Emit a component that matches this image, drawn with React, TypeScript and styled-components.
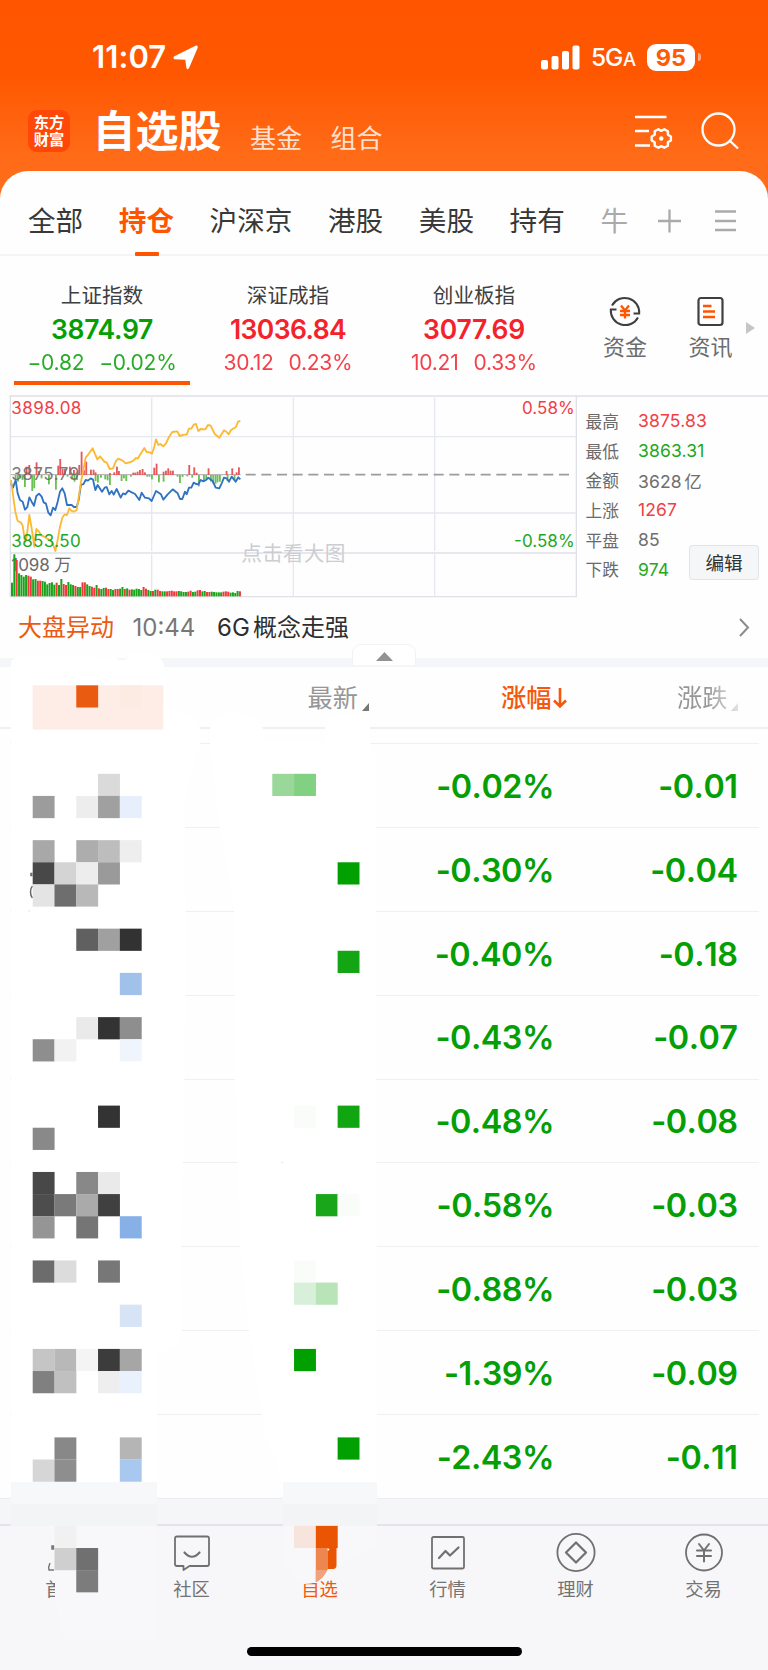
import React from "react";
import styled, { createGlobalStyle, css } from "styled-components";

const GREEN = "#049f04";
const RED = "#f3222b";
const ORANGE = "#ff5500";

const Global = createGlobalStyle`
  * { box-sizing: border-box; }
  body {
    margin: 0;
    background: #fefefe;
    font-family: Inter, "Noto Sans CJK SC", sans-serif;
    color: #333;
  }
`;

const Page = styled.div`
  position: relative;
  width: 768px;
  height: 1670px;
  overflow: hidden;
  display: flex;
  flex-direction: column;
  background: linear-gradient(#ff5500 0, #ff5700 75px, #ff6a17 150px, #ff6e1c 200px);
  white-space: nowrap;
`;

/* ---------- status bar ---------- */
const StatusBar = styled.header`
  height: 90px;
  padding: 24px 67px 0 92px;
  display: flex;
  align-items: center;
  color: #fff;
`;
const Clock = styled.span`
  font-size: 31px;
  font-weight: 600;
  line-height: 36px;
  letter-spacing: 0.1px;
  width: 81px;
  margin-top: -1px;
`;
const StatusRight = styled.div`
  margin-left: auto;
  display: flex;
  align-items: center;
`;
const Network = styled.span`
  width: 56px;
  margin: 1px 0 0 11px;
  font-size: 24.5px;
  font-weight: 500;
  letter-spacing: -1.2px;
  line-height: 30px;
  small { font-size: 18.5px; margin-left: 1px; }
`;
const Battery = styled.div`
  width: 48px;
  height: 27px;
  border-radius: 9px;
  background: #fff;
  color: #ff5a04;
  font-size: 23.5px;
  font-weight: 700;
  line-height: 27px;
  text-align: center;
`;
const BatteryNub = styled.div`
  width: 3px;
  height: 8px;
  margin-left: 3px;
  border-radius: 0 3px 3px 0;
  background: #ffa87c;
`;

/* ---------- title bar ---------- */
const TitleBar = styled.div`
  height: 81px;
  padding: 0 29px 0 28px;
  display: flex;
  align-items: center;
`;
const Logo = styled.div`
  width: 42px;
  height: 42px;
  border-radius: 9px;
  background: #ff4708;
  color: #fff;
  font-family: "Liberation Sans", "Noto Sans CJK SC", sans-serif;
  font-size: 15.3px;
  font-weight: 700;
  line-height: 17.6px;
  padding-top: 4px;
  text-align: center;
`;
const PageTitle = styled.h1`
  margin: 0 0 0 22.5px;
  font-size: 43px;
  font-weight: 700;
  line-height: 48px;
  color: #fff;
`;
const TitleLink = styled.span<{ $gap: number }>`
  margin: 17px 0 0 ${(p) => p.$gap}px;
  font-size: 26px;
  line-height: 30px;
  color: #ffe0cf;
`;
const TitleIcons = styled.div`
  margin-left: auto;
  display: flex;
  align-items: center;
`;

/* ---------- white panel ---------- */
const Panel = styled.main`
  flex: 1;
  display: flex;
  flex-direction: column;
  background: #fefefe;
  border-radius: 28px 28px 0 0;
`;
const Tabs = styled.nav`
  height: 85px;
  padding: 17px 0 0 28px;
  display: flex;
  align-items: center;
  gap: 35.6px;
  border-bottom: 2px solid #f4f4f5;
`;
const Tab = styled.span<{ $on?: boolean; $faded?: boolean }>`
  position: relative;
  flex: none;
  font-size: 27.6px;
  line-height: 34px;
  color: ${(p) => (p.$on ? ORANGE : p.$faded ? "#aaa" : "#383838")};
  font-weight: ${(p) => (p.$on ? 700 : 400)};
  ${(p) =>
    p.$on &&
    css`
      &::after {
        content: "";
        position: absolute;
        left: 16px;
        bottom: -18px;
        width: 24px;
        height: 4px;
        background: ${ORANGE};
        border-radius: 1px;
      }
    `}
`;
const TabTools = styled.div`
  margin-left: -6.5px;
  flex: none;
  display: flex;
`;

/* ---------- index strip ---------- */
const IndexStrip = styled.section`
  height: 140px;
  padding: 26px 0 0 9px;
  display: flex;
`;
const IndexCard = styled.div<{ $color: string; $on?: boolean }>`
  width: 186px;
  height: 103px;
  display: flex;
  flex-direction: column;
  align-items: center;
  color: ${(p) => p.$color};
  position: relative;
  ${(p) =>
    p.$on &&
    css`
      &::after {
        content: "";
        position: absolute;
        left: 5px;
        bottom: 0;
        width: 176px;
        height: 4px;
        background: ${ORANGE};
      }
    `}
`;
const IndexName = styled.span`
  font-size: 20.6px;
  line-height: 28px;
  color: #3f3f3f;
`;
const IndexValue = styled.strong<{ $ls: number }>`
  font-size: 26.5px;
  font-weight: 600;
  line-height: 36px;
  margin-top: 1px;
  letter-spacing: ${(p) => p.$ls}px;
`;
const IndexChange = styled.span`
  display: flex;
  gap: 15px;
  font-size: 21px;
  letter-spacing: -0.25px;
  line-height: 30px;
  margin-top: 1px;
  opacity: 0.86;
`;
const Shortcut = styled.div<{ $w: number }>`
  width: ${(p) => p.$w}px;
  padding-top: 13px;
  display: flex;
  flex-direction: column;
  align-items: center;
  gap: 3px;
  font-size: 22px;
  line-height: 30px;
  color: #6c6c6c;
`;
const MoreArrow = styled.div`
  margin: 40px 0 0 8px;
  width: 0;
  height: 0;
  border: solid transparent;
  border-width: 6px 0 6px 9px;
  border-left-color: #c6c6c6;
`;

/* ---------- chart ---------- */
const ChartRow = styled.section`
  height: 204px;
  display: flex;
`;
const ChartSvg = styled.svg`
  flex: none;
  overflow: visible;
`;
const Quotes = styled.div`
  flex: 1;
  position: relative;
  padding: 10px 0 0 5.5px;
`;
const QuoteLine = styled.div<{ $color: string }>`
  display: flex;
  height: 29.7px;
  align-items: center;
  font-size: 17.5px;
  letter-spacing: 0.15px;
  word-spacing: -2.5px;
  color: ${(p) => p.$color};
  span {
    width: 52.5px;
    font-size: 16.7px;
    letter-spacing: 0;
    color: #6a6a6a;
  }
`;
const EditButton = styled.button`
  position: absolute;
  left: 109px;
  top: 149px;
  width: 70px;
  height: 35px;
  padding: 0 0 2px;
  border: 1px solid #e2e4e8;
  border-radius: 3px;
  background: #f5f6f8;
  font: 18.6px Inter, "Noto Sans CJK SC", sans-serif;
  color: #333;
`;

/* ---------- news ---------- */
const News = styled.section`
  height: 58px;
  padding: 0 18px 2px 18px;
  display: flex;
  align-items: center;
  font-size: 24px;
  line-height: 30px;
  word-spacing: -3.5px;
  color: #2e2e2e;
`;
const NewsTag = styled.span`
  color: #ea5a14;
  width: 114.5px;
`;
const NewsTime = styled.span`
  color: #777;
  width: 84.5px;
`;
const Divider = styled.div`
  height: 9px;
  background: #f4f6f9;
  position: relative;
`;
const Handle = styled.div`
  position: absolute;
  left: 352px;
  top: -14px;
  width: 64px;
  height: 21px;
  background: #fff;
  border: 1px solid #f1f2f4;
  border-bottom: 0;
  border-radius: 9px 9px 0 0;
  display: flex;
  justify-content: center;
  padding-top: 7px;
`;

/* ---------- holdings table ---------- */
const TableHead = styled.div`
  height: 62px;
  padding-top: 2px;
  display: grid;
  grid-template-columns: 307.5px 193.5px 176px 1fr;
  align-items: center;
  font-size: 25.2px;
  color: #969696;
  border-bottom: 2px solid #f0f0f0;
`;
const HeadCell = styled.span<{ $active?: boolean; $fade?: boolean }>`
  display: flex;
  align-items: center;
  gap: 2px;
  line-height: 32px;
  font-weight: ${(p) => (p.$active ? 500 : 400)};
  color: ${(p) => (p.$active ? "#f4580c" : "inherit")};
  ${(p) =>
    p.$fade &&
    css`
      mask-image: linear-gradient(90deg, #000 28px, rgba(0, 0, 0, 0.3) 60px);
    `}
`;
const HeadMark = styled.svg`
  margin: 17px 0 0 1px;
`;
const TableBody = styled.div`
  flex: none;
  height: 769.3px;
  padding: 14.3px 9px 0 10px;
`;
const Row = styled.div`
  height: 83.84px;
  padding: 1.5px 21.5px 0 0;
  border-top: 1.5px solid #f0f0f0;
  display: grid;
  grid-template-columns: 1fr 183.5px;
  align-items: center;
  justify-items: end;
  font-size: 32.4px;
  font-weight: 600;
  letter-spacing: -0.5px;
  font-kerning: none;
  color: ${GREEN};
`;

/* ---------- bottom bar ---------- */
const Gap = styled.div`
  height: 28px;
  border-top: 1px solid #ededf0;
  border-bottom: 2px solid #e4e4ea;
  background: #f5f6f8;
`;
const BottomBar = styled.footer`
  flex: 1;
  background: #f7f7f9;
  display: flex;
  flex-direction: column;
  align-items: center;
`;
const BottomTabs = styled.div`
  width: 768px;
  height: 121px;
  display: flex;
`;
const BottomTab = styled.div<{ $on?: boolean }>`
  width: 128px;
  padding: 6px 1px 0 0;
  display: flex;
  flex-direction: column;
  align-items: center;
  gap: 4px;
  font-size: 18.3px;
  line-height: 26px;
  color: ${(p) => (p.$on ? "#f0590f" : "#737373")};
`;
const HomeIndicator = styled.div`
  width: 275px;
  height: 9px;
  border-radius: 5px;
  background: #000;
`;
const Mosaic = styled.svg`
  position: absolute;
  inset: 0;
  pointer-events: none;
`;
const Chevron = styled.svg`
  margin-left: auto;
`;

/* ---------- data ---------- */
const tabs = ["全部", "持仓", "沪深京", "港股", "美股", "持有", "牛"];
const indices = [
  { name: "上证指数", value: "3874.97", diff: "−0.82", pct: "−0.02%", color: "#049f04", ls: -0.3 },
  { name: "深证成指", value: "13036.84", diff: "30.12", pct: "0.23%", color: RED, ls: -0.6 },
  { name: "创业板指", value: "3077.69", diff: "10.21", pct: "0.33%", color: RED, ls: -0.2 },
];
const quotes: [string, string, string][] = [
  ["最高", "3875.83", "#f04046"],
  ["最低", "3863.31", "#22a822"],
  ["金额", "3628 亿", "#6f6f6f"],
  ["上涨", "1267", "#f04046"],
  ["平盘", "85", "#6f6f6f"],
  ["下跌", "974", "#22a822"],
];
const rows = [
  ["-0.02%", "-0.01"],
  ["-0.30%", "-0.04"],
  ["-0.40%", "-0.18"],
  ["-0.43%", "-0.07"],
  ["-0.48%", "-0.08"],
  ["-0.58%", "-0.03"],
  ["-0.88%", "-0.03"],
  ["-1.39%", "-0.09"],
  ["-2.43%", "-0.11"],
];

const yellow =
  "33,285 39,330 46,380 53,408 62,412 68,422 75,470 80,455 88,390 95,430 103,485 109,432 117,440 125,452 133,455 140,460 150,465 158,475 166,498 172,470 180,425 187,398 194,388 201,390 208,370 215,378 222,380 230,375 235,345 243,290 250,255 257,218 265,208 278,190 292,223 300,214 313,230 320,233 329,252 339,250 348,228 355,221 368,227 377,235 392,231 400,227 408,219 413,221 423,205 433,189 440,201 449,202 456,206 463,185 468,163 475,180 481,177 490,184 498,175 507,156 517,141 532,139 539,153 552,149 560,149 567,131 574,131 581,119 588,117 595,138 602,132 616,133 624,120 632,122 640,138 645,148 658,158 665,147 672,136 680,141 686,148 693,135 708,126 714,110 721,108";
const blue =
  "33,295 39,308 47,285 53,325 60,345 68,350 75,374 82,366 88,337 95,350 102,362 109,333 117,326 125,335 131,352 138,356 145,383 152,391 159,368 166,375 173,350 180,320 187,310 194,325 201,360 215,360 222,366 230,366 236,345 243,298 250,298 257,285 264,287 272,280 279,284 286,315 293,300 306,320 314,308 320,306 328,328 335,318 341,329 350,312 362,338 369,325 376,328 385,317 405,327 418,345 425,323 435,338 447,340 455,348 468,318 483,328 490,344 503,328 518,313 533,325 540,342 547,342 555,320 560,328 567,308 574,308 581,293 588,297 595,298 602,285 610,289 618,285 625,278 638,288 647,308 658,310 665,295 672,278 680,280 687,290 695,275 707,290 715,277 721,283";
const ups =
  "80:245 88:240 110:232 117:258 175:242 181:222 188:252 195:252 210:245 222:255 238:240 245:200 252:255 259:230 273:254 281:254 287:262 330:264 343:262 351:245 357:258 400:263 406:263 413:260 420:255 428:252 435:262 463:248 470:236 491:260 498:257 505:250 512:257 519:257 568:240 583:247 590:263 626:250 680:258 697:250 710:262 717:247";
const downs =
  "47:285 54:290 62:280 68:285 75:306 97:318 103:310 125:280 147:298 168:314 203:275 217:282 224:290 231:285 287:288 294:293 303:278 316:283 323:286 330:300 365:288 372:280 379:288 393:275 442:275 449:275 456:283 477:292 491:290 533:275 540:294 548:276 562:274 577:278 597:304 612:288 619:282 633:290 640:296 647:296 653:292 660:290 683:288 704:285";
const volTops = [
  593, 508, 525, 565, 570, 575, 570, 572, 575, 583, 582, 587, 587, 588, 590, 598, 594, 592, 599, 593, 600, 582, 597, 600,
  591, 598, 600, 603, 606, 606, 592, 592, 598, 603, 605, 608, 600, 610, 612, 609, 608, 612, 612, 615, 612, 612, 611, 606,
  612, 610, 614, 613, 614, 611, 612, 615, 606, 611, 615, 618, 618, 614, 614, 618, 619, 619, 619, 618, 617, 619, 619, 618,
  619, 621, 621, 620, 617, 621, 620, 616, 615, 619, 618, 621, 621, 620, 621, 622, 622, 622, 620, 619, 620, 623, 622, 624,
  618, 619,
];
const volColors =
  "ggrggggrrggrrggggggrggrrgggrggrrggrrgrggrrggrrggrgrgggggrrggrgrrggrrrrrggggrrggrrggrrgggggrrrggggrr".split("");

const bars = (s: string) => s.split(" ").map((b) => b.split(":").map(Number));

/* Intraday chart, drawn in units of a third of a pixel. */
const MinuteChart = () => (
  <ChartSvg width="580" height="204" viewBox="0 33 1740 612" fontFamily="Inter, 'Noto Sans CJK SC', sans-serif" fontSize="51">
    <g stroke="#e6e8ef" strokeWidth="4" fill="none">
      <path d="M31 155H1727M31 384H1727M455 38V498M880 38V498M1304 38V498M455 508V632M880 508V632M1304 508V632" />
      <path d="M31 33V635H1729V33M31 504H1727" stroke="#dfe1e8" />
      <path d="M28 33H2304" stroke="#dfe1e8" />
    </g>
    <path d="M33 269H722" stroke="#aaa" strokeWidth="3" />
    <path d="M737 269H1716" stroke="#9c9c9c" strokeWidth="5" strokeDasharray="30 17" />
    <text x="724" y="527" fontSize="62" textLength="312" fill="#cccdd2">点击看大图</text>
    <text x="34" y="559" textLength="180" fill="#6a6a6a">1098 万</text>
    {bars(ups).map(([x, y]) => (
      <rect key={x} x={x - 3} y={y} width="5.5" height={270 - y} fill="#e5595d" />
    ))}
    {bars(downs).map(([x, y]) => (
      <rect key={x} x={x - 3} y="270" width="5.5" height={y - 270} fill="#6abf55" />
    ))}
    {volTops.map((y, i) => (
      <rect key={i} x={33 + i * 7.05} y={y} width="6" height={634 - y} fill={volColors[i] === "r" ? "#f0383e" : "#18a418"} />
    ))}
    <g fill="none" strokeWidth="5.5" strokeLinejoin="round">
      <polyline points={blue} stroke="#2f72c4" />
      <polyline points={yellow} stroke="#fcb934" />
    </g>
    <text x="34" y="86" textLength="210" fill="#f04046">3898.08</text>
    <text x="34" y="285" textLength="204" fill="#6a6a6a" fillOpacity=".9">3875.79</text>
    <text x="34" y="485" textLength="208" fill="#22a822">3853.50</text>
    <text x="1566" y="86" textLength="158" fill="#f04046">0.58%</text>
    <text x="1542" y="485" textLength="182" fill="#22a822">-0.58%</text>
  </ChartSvg>
);

/* Privacy mosaic: cells as [row, column, colour] on one shared grid. */
const CELL_W = 21.78;
const CELL_H = 22.12;
const cells: [number, number, string][] = [
  [-4, 2, "#ea5b12"], [0, 3, "#dadada"], [0, 11, "#9ad89a"], [0, 12, "#82d082"],
  [1, 0, "#9c9c9c"], [1, 2, "#ededed"], [1, 3, "#a0a0a0"], [1, 4, "#e6effb"],
  [3, 0, "#a8a8a8"], [3, 2, "#adadad"], [3, 3, "#bdbdbd"], [3, 4, "#eeeeee"],
  [4, 0, "#484848"], [4, 1, "#d4d4d4"], [4, 2, "#ededed"], [4, 3, "#9a9a9a"], [4, 14, "#00a000"],
  [5, 0, "#e4e4e4"], [5, 1, "#6e6e6e"], [5, 2, "#b8b8b8"],
  [7, 2, "#606060"], [7, 3, "#a0a0a0"], [7, 4, "#323232"], [8, 14, "#14a514"], [9, 4, "#9fc1ea"],
  [11, 2, "#eaeaea"], [11, 3, "#333333"], [11, 4, "#8e8e8e"],
  [12, 0, "#8e8e8e"], [12, 1, "#f2f2f2"], [12, 4, "#f0f5fd"],
  [15, 3, "#333333"], [15, 12, "#fafcfa"], [15, 14, "#12a512"], [16, 0, "#898989"],
  [18, 0, "#484848"], [18, 2, "#888888"], [18, 3, "#eaeaea"],
  [19, 0, "#4d4d4d"], [19, 1, "#7a7a7a"], [19, 2, "#aaaaaa"], [19, 3, "#404040"], [19, 13, "#1aa61a"], [19, 14, "#fafcfa"],
  [20, 0, "#959595"], [20, 2, "#757575"], [20, 4, "#87b1e6"],
  [22, 0, "#6c6c6c"], [22, 1, "#dcdcdc"], [22, 3, "#777777"], [22, 12, "#fafcfa"],
  [23, 12, "#d8efd9"], [23, 13, "#b8e4b8"], [24, 4, "#d6e4f6"],
  [26, 0, "#c5c5c5"], [26, 1, "#b8b8b8"], [26, 2, "#f4f4f4"], [26, 3, "#3c3c3c"], [26, 4, "#a6a6a6"], [26, 12, "#00a000"],
  [27, 0, "#808080"], [27, 1, "#c0c0c0"], [27, 3, "#eeeeee"], [27, 4, "#e9f1fc"],
  [30, 1, "#888888"], [30, 4, "#b5b5b5"], [30, 14, "#00a000"],
  [31, 0, "#d6d6d6"], [31, 1, "#8e8e8e"], [31, 4, "#a9c8ef"],
  [34, 1, "#f1f1f2"], [34, 12, "#f7e4dc"], [34, 13, "#ea5504"],
  [35, 1, "#cfcfd0"], [35, 2, "#707070"], [36, 2, "#7c7c7c"],
];

const PrivacyOverlay = () => (
  <Mosaic width="768" height="1670" viewBox="0 0 768 1670">
    <g fill="#fff">
      <path d="M11 662Q11 656 40 656L115 658Q125 664 130 655Q146 648 160 658Q166 664 166 680L168 710Q200 712 200 729L200 745Q192 770 185 800L186 1000L181 1250L182 1332Q180 1352 157 1352L157 1500L11 1500Z" />
      <path d="M210 745V726Q218 712 236 712Q262 716 265 735L266 742H325V726Q325 715 345 715H370V742L376 760V828L377 1500H283Q278 1450 266 1440L249 1330L240 1246L235 1079L234 911L220 827Z" />
    </g>
    <path d="M28 911h2.500M281 1162.500h2.500" stroke="#eeeeee" strokeWidth="1.500" />
    <rect x="32.700" y="685.300" width="130.700" height="44.300" fill="#fdede6" />
    <rect x="120" y="685.300" width="21.800" height="22" fill="#fcebe3" />
    <path d="M32.500 873.500h-1.500v2h1.500M32.500 886q-2 2-2 6t2 6" fill="none" stroke="#666" strokeWidth="1.500" />
    {[11, 283].map((x, i) => (
      <g key={x}>
        <rect x={x} y="1482" width={i ? 94 : 146} height="22" fill="#f7f8fa" />
        <rect x={x} y="1504" width={i ? 94 : 146} height="22" fill="#f3f4f6" />
      </g>
    ))}
    <path d="M11 1526H157V1640H64L55 1600V1560L52 1552 50 1526Z" fill="#f8f8fa" />
    <path d="M283 1526H377V1540Q372 1552 350 1558L317 1582Q310 1584.500 302 1584Q290 1576 283 1560Z" fill="#f8f8fa" />
    <path d="M52 1546h1.500v3H52zM50 1563q-2 4-1 7h5" fill="none" stroke="#777" strokeWidth="1.500" />
    {cells.map(([r, c, fill]) => (
      <rect
        key={`${r}-${c}`}
        x={32.7 + c * CELL_W}
        y={773.8 + r * CELL_H}
        width={CELL_W + 0.1}
        height={CELL_H + 0.1}
        fill={fill}
      />
    ))}
    <path d="M315.800 1548H336.500V1565Q336.500 1569 333 1569H327L327 1548Z" fill="#ea5504" />
    <path d="M315.800 1548H328V1569Q322 1580 315.800 1582Z" fill="#ee8650" />
    <path d="M315.800 1570H327Q322 1580 315.800 1582Z" fill="#f2a27b" />
    <circle cx="328.300" cy="1549.500" r="1" fill="#fff" />
  </Mosaic>
);

const stroke = { fill: "none", stroke: "#707070", strokeWidth: 1.8, strokeLinejoin: "round" as const, strokeLinecap: "round" as const };

const App = () => (
  <>
    <Global />
    <Page>
      <StatusBar>
        <Clock>11:07</Clock>
        <svg width="25" height="25" viewBox="0 0 25 25">
          <path d="M1.200 14.200Q-.5 12.800 1.400 11.300L22 1Q25.200 -.3 24.600 2.900L16.200 22.800Q14.700 25.600 13.400 22.900L12.300 14.700Z" fill="#fff" />
        </svg>
        <StatusRight>
          <svg width="39" height="25" viewBox="0 0 39 25" fill="#fff">
            <rect y="15" width="7" height="9.500" rx="2" />
            <rect x="10.500" y="11" width="7" height="13.500" rx="2" />
            <rect x="21" y="6" width="7" height="18.500" rx="2" />
            <rect x="31.500" y="0.500" width="7" height="24" rx="2" />
          </svg>
          <Network>5G<small>A</small></Network>
          <Battery>95</Battery>
          <BatteryNub />
        </StatusRight>
      </StatusBar>

      <TitleBar>
        <Logo>东方<br />财富</Logo>
        <PageTitle>自选股</PageTitle>
        <TitleLink $gap={28.5}>基金</TitleLink>
        <TitleLink $gap={28.5}>组合</TitleLink>
        <TitleIcons>
          <svg width="66" height="40" viewBox="0 0 66 40" fill="none" stroke="#fff" strokeWidth="2.400">
            <path d="M0 6H31.500M0 20H14M0 34.500H15" />
            <path
              strokeLinejoin="round"
              d="M35.900 25.500V29.500L32.900 31.300V34.800L29.300 36.800L26.300 35.100L23.300 36.800L19.700 34.800V31.300L16.700 29.500V25.500L19.700 23.700V20.200L23.300 18.200L26.300 19.900L29.300 18.200L32.900 20.200V23.700Z"
            />
            <circle cx="26.300" cy="27.500" r="2.200" fill="#fff" stroke="none" />
          </svg>
          <svg width="38" height="40" viewBox="0 0 38 40" fill="none" stroke="#fff" strokeWidth="2.300">
            <circle cx="17.500" cy="18.500" r="16" />
            <path d="M28.500 29.500L37 37.500" />
          </svg>
        </TitleIcons>
      </TitleBar>

      <Panel>
        <Tabs>
          {tabs.map((t) => (
            <Tab key={t} $on={t === "持仓"} $faded={t === "牛"}>{t}</Tab>
          ))}
          <TabTools>
            <svg width="80" height="26" viewBox="0 0 80 26" stroke="#aaa" strokeWidth="2.300">
              <path d="M1 13H24M12.500 1.500V24.500M58 3.500H79M58 13H79M58 22H79" />
            </svg>
          </TabTools>
        </Tabs>

        <IndexStrip>
          {indices.map((x, i) => (
            <IndexCard key={x.name} $color={x.color} $on={i === 0}>
              <IndexName>{x.name}</IndexName>
              <IndexValue $ls={x.ls}>{x.value}</IndexValue>
              <IndexChange><span>{x.diff}</span><span>{x.pct}</span></IndexChange>
            </IndexCard>
          ))}
          <Shortcut $w={116}>
            <svg width="32" height="34" viewBox="0 0 32 34" fill="none" stroke="#3f3f3f" strokeWidth="2">
              <path d="M3 10.500A14.500 14.500 0 0 1 30.200 18.500H24.500M29 22.500A14.500 14.500 0 0 1 1.800 14.500H7.500" />
              <path d="M12 10.500L16 15.500L20 10.500M16 15.500V23.500M11 16H21M11 20H21" stroke={ORANGE} strokeWidth="2.300" />
            </svg>
            资金
          </Shortcut>
          <Shortcut $w={55}>
            <svg width="27" height="34" viewBox="0 0 27 34" fill="none" stroke="#3f3f3f" strokeWidth="2.200">
              <rect x="1.500" y="3" width="24" height="27" rx="2.500" />
              <path d="M6 11H14.500M6 16.500H18M6 22H18" stroke={ORANGE} strokeWidth="2.400" />
            </svg>
            资讯
          </Shortcut>
          <MoreArrow />
        </IndexStrip>

        <ChartRow>
          <MinuteChart />
          <Quotes>
            {quotes.map(([k, v, c]) => (
              <QuoteLine key={k} $color={c}><span>{k}</span>{v}</QuoteLine>
            ))}
            <EditButton>编辑</EditButton>
          </Quotes>
        </ChartRow>

        <News>
          <NewsTag>大盘异动</NewsTag>
          <NewsTime>10:44</NewsTime>
          <span>6G 概念走强</span>
          <Chevron width="12" height="20" viewBox="0 0 12 20" fill="none" stroke="#8c8c8c" strokeWidth="2">
            <path d="M2 1L10 9.500L2 18" />
          </Chevron>
        </News>
        <Divider>
          <Handle>
            <svg width="17" height="9" viewBox="0 0 17 9"><path d="M8.500 0L17 9H0Z" fill="#929292" /></svg>
          </Handle>
        </Divider>

        <TableHead>
          <span />
          <HeadCell>最新<HeadMark width="8" height="8" viewBox="0 0 8 8"><path d="M8 0V8H1Z" fill="#777" /></HeadMark></HeadCell>
          <HeadCell $active>
            涨幅
            <svg width="14" height="22" viewBox="0 0 14 22" fill="none" stroke="#f4580c" strokeWidth="2.600">
              <path d="M7 1V19M1 13.500L7 19.500L13 13.500" />
            </svg>
          </HeadCell>
          <HeadCell $fade>涨跌<HeadMark width="8" height="8" viewBox="0 0 8 8"><path d="M8 0V8H1Z" fill="#999" /></HeadMark></HeadCell>
        </TableHead>
        <TableBody>
          {rows.map(([pct, diff], i) => (
            <Row key={i}><span>{pct}</span><span>{diff}</span></Row>
          ))}
        </TableBody>

        <Gap />
        <BottomBar>
          <BottomTabs>
            <BottomTab>
              <svg width="40" height="40" />
              首页
            </BottomTab>
            <BottomTab>
              <svg width="40" height="40" viewBox="0 0 40 40" {...stroke}>
                <path d="M5 4.500H35Q37 4.500 37 6.500V32Q37 34 35 34H17.500L11.500 38V34H5Q3 34 3 32V6.500Q3 4.500 5 4.500Z" />
                <path d="M12.500 20.500Q20 29 27.500 20.500" strokeWidth="2.200" />
              </svg>
              社区
            </BottomTab>
            <BottomTab $on>
              <svg width="40" height="40" />
              自选
            </BottomTab>
            <BottomTab>
              <svg width="40" height="40" viewBox="0 0 40 40" {...stroke}>
                <rect x="4" y="5" width="32" height="31.500" rx="1.500" />
                <path d="M11 26L17.500 19L22 23.500L30.500 15.500" strokeWidth="2.200" />
              </svg>
              行情
            </BottomTab>
            <BottomTab>
              <svg width="40" height="40" viewBox="0 0 40 40" {...stroke}>
                <circle cx="20" cy="20.500" r="18.600" />
                <path d="M20 10.500L30 20.500L20 30.500L10 20.500Z" strokeWidth="2.200" />
              </svg>
              理财
            </BottomTab>
            <BottomTab>
              <svg width="40" height="40" viewBox="0 0 40 40" {...stroke}>
                <circle cx="20" cy="20.500" r="18" />
                <path d="M15 12L20 18.500L25 12M20 18.500V29.500M13 18.500H27M13 24H27" strokeWidth="2" />
              </svg>
              交易
            </BottomTab>
          </BottomTabs>
          <HomeIndicator />
        </BottomBar>
      </Panel>
      <PrivacyOverlay />
    </Page>
  </>
);

export default App;
